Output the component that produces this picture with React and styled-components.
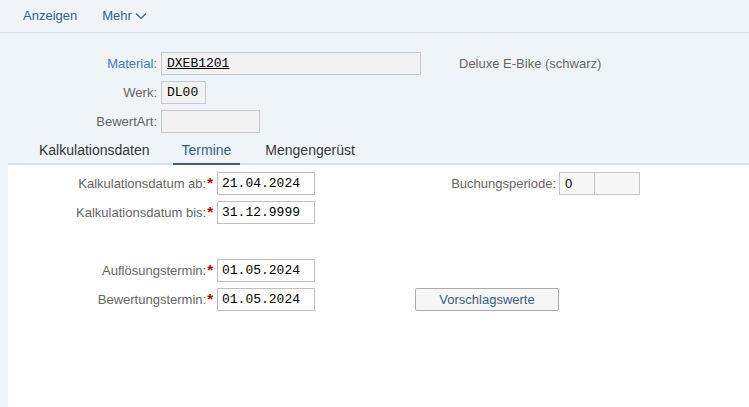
import React from "react"
import styled, { createGlobalStyle } from "styled-components"

const GlobalStyle = createGlobalStyle`
  html, body {
    margin: 0;
    padding: 0;
    background: #eff4f9;
  }
  body {
    font-family: "Liberation Sans", Arial, sans-serif;
    font-size: 13px;
    color: #32363a;
  }
`

const Page = styled.div`
  width: 749px;
  height: 407px;
  display: flex;
  flex-direction: column;
  background: #eff4f9;
  overflow: hidden;
`

const Toolbar = styled.div`
  height: 33px;
  box-sizing: border-box;
  display: flex;
  align-items: center;
  gap: 25px;
  padding: 0 0 1px 23px;
  border-bottom: 1px solid #d6e3ef;
`

const ToolbarButton = styled.span`
  color: #346187;
  font-size: 13px;
  display: inline-flex;
  align-items: center;
  gap: 3px;
`

const Header = styled.div`
  display: grid;
  grid-template-columns: 157px auto 1fr;
  column-gap: 4px;
  row-gap: 6px;
  padding-top: 19px;
  align-items: center;
`

const Label = styled.label`
  text-align: right;
  white-space: nowrap;
  color: ${(p) => (p.$accent ? "#427cac" : "#666666")};
`

const HeaderField = styled.div`
  box-sizing: border-box;
  height: 23px;
  width: ${(p) => p.$w}px;
  border: 1px solid #c4c8cc;
  background: #f2f2f2;
  display: flex;
  align-items: center;
  padding-left: 5px;
  font-family: "Liberation Mono", "DejaVu Sans Mono", monospace;
  font-size: 13px;
  color: #000;
  span {
    text-decoration: ${(p) => (p.$link ? "underline" : "none")};
  }
`

const Description = styled.span`
  color: #666666;
  padding-left: 34px;
`

const Tabs = styled.div`
  display: flex;
  margin-left: 8px;
  margin-top: 1px;
  height: 31px;
  box-sizing: border-box;
  border-bottom: 2px solid #d1e0ee;
  padding-left: 22px;
`

const Tab = styled.div`
  padding: 0 9px;
  margin-right: 14px;
  display: flex;
  align-items: center;
  font-size: 14px;
  color: ${(p) => (p.$active ? "#346187" : "#32363a")};
  position: relative;
  top: 2px;
  border-bottom: 2px solid ${(p) => (p.$active ? "#346187" : "transparent")};
  box-sizing: border-box;
  &:nth-child(2) {
    margin-right: 16px;
  }
`

const Content = styled.div`
  flex: 1;
  margin-left: 8px;
  background: #ffffff;
  padding-top: 7px;
  display: grid;
  grid-template-columns: 209px 98px 100px 225px;
  grid-template-rows: repeat(5, 23px);
  row-gap: 6px;
  align-items: center;
`

const FieldLabel = styled.div`
  display: flex;
  justify-content: flex-end;
  align-items: center;
  color: #666666;
  white-space: nowrap;
  padding-right: 4px;
  grid-column: 1;
  grid-row: ${(p) => p.$row};
`

const Required = styled.span`
  color: #bb0000;
  font-size: 15px;
  font-weight: bold;
  margin-left: 1px;
  align-self: flex-start;
  line-height: 14px;
`

const DateInput = styled.div`
  box-sizing: border-box;
  height: 23px;
  width: 98px;
  border: 1px solid #bfbfbf;
  background: #fff;
  display: flex;
  align-items: center;
  padding-left: 4px;
  font-family: "Liberation Mono", "DejaVu Sans Mono", monospace;
  font-size: 13px;
  color: #000;
  grid-column: 2;
  grid-row: ${(p) => p.$row};
`

const RightCell = styled.div`
  grid-column: 4;
  grid-row: ${(p) => p.$row};
  display: flex;
  align-items: center;
  justify-content: ${(p) => (p.$end ? "flex-end" : "flex-start")};
`

const PeriodLabel = styled.span`
  color: #666666;
  margin-right: 3px;
`

const SmallBox = styled.div`
  box-sizing: border-box;
  height: 23px;
  width: ${(p) => p.$w}px;
  border: 1px solid #c4c8cc;
  background: #f7f7f7;
  display: flex;
  align-items: center;
  padding-left: 5px;
  font-size: 13px;
  color: #000;
  & + & {
    border-left: none;
  }
`

const Button = styled.button`
  box-sizing: border-box;
  height: 23px;
  width: 144px;
  border: 1px solid #ababab;
  border-radius: 2px;
  background: #f7f7f7;
  color: #346187;
  font-family: "Liberation Sans", Arial, sans-serif;
  font-size: 13px;
  padding: 0;
`

const Chevron = () => (
  <svg width="12" height="8" viewBox="0 0 12 8" fill="none">
    <path d="M1 1.5 L6 6.5 L11 1.5" stroke="#346187" strokeWidth="1.2" />
  </svg>
)

export default function App() {
  return (
    <Page>
      <GlobalStyle />
      <Toolbar>
        <ToolbarButton>Anzeigen</ToolbarButton>
        <ToolbarButton>
          Mehr <Chevron />
        </ToolbarButton>
      </Toolbar>

      <Header>
        <Label $accent>Material:</Label>
        <HeaderField $w={260} $link>
          <span>DXEB1201</span>
        </HeaderField>
        <Description>Deluxe E-Bike (schwarz)</Description>

        <Label>Werk:</Label>
        <HeaderField $w={45}>
          <span>DL00</span>
        </HeaderField>
        <span />

        <Label>BewertArt:</Label>
        <HeaderField $w={99} />
        <span />
      </Header>

      <Tabs>
        <Tab>Kalkulationsdaten</Tab>
        <Tab $active>Termine</Tab>
        <Tab>Mengengerüst</Tab>
      </Tabs>

      <Content>
        <FieldLabel $row={1}>
          Kalkulationsdatum ab:<Required>*</Required>
        </FieldLabel>
        <DateInput $row={1}>21.04.2024</DateInput>
        <RightCell $row={1} $end>
          <PeriodLabel>Buchungsperiode:</PeriodLabel>
          <SmallBox $w={36}>0</SmallBox>
          <SmallBox $w={45} />
        </RightCell>

        <FieldLabel $row={2}>
          Kalkulationsdatum bis:<Required>*</Required>
        </FieldLabel>
        <DateInput $row={2}>31.12.9999</DateInput>

        <FieldLabel $row={4}>
          Auflösungstermin:<Required>*</Required>
        </FieldLabel>
        <DateInput $row={4}>01.05.2024</DateInput>

        <FieldLabel $row={5}>
          Bewertungstermin:<Required>*</Required>
        </FieldLabel>
        <DateInput $row={5}>01.05.2024</DateInput>
        <RightCell $row={5}>
          <Button>Vorschlagswerte</Button>
        </RightCell>
      </Content>
    </Page>
  )
}
